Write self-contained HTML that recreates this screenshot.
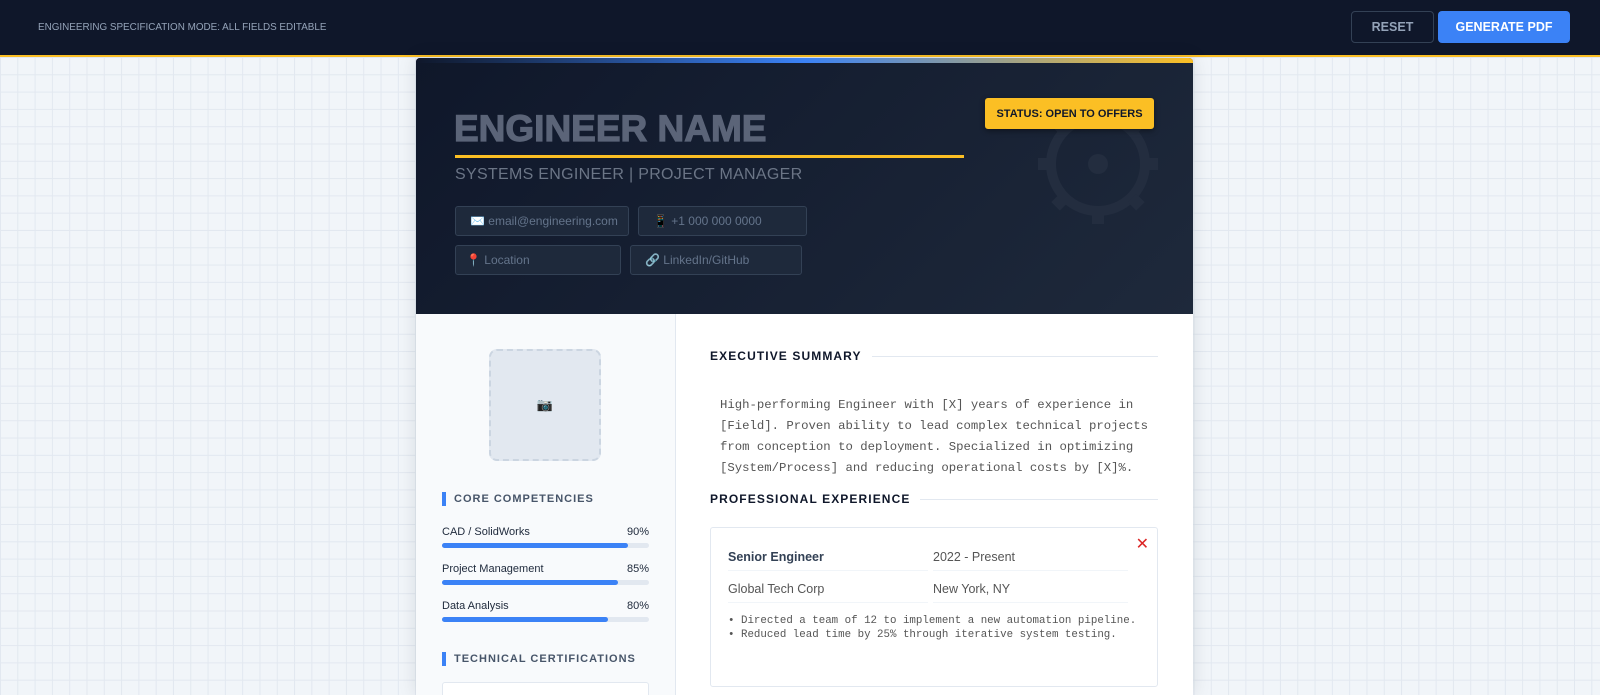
<!DOCTYPE html>
<html><head><meta charset="utf-8"><style>
*{box-sizing:border-box;margin:0;padding:0}
html,body{width:1600px;height:695px;overflow:hidden}
body{font-family:"Liberation Sans",sans-serif;background-color:#f1f5f9;background-image:linear-gradient(#e2e8f0 1px,transparent 1px),linear-gradient(90deg,#e2e8f0 1px,transparent 1px);background-size:17.3px 17.3px;background-position:0 57px,0 0;position:relative}
.top{position:absolute;left:0;top:0;width:1600px;height:57px;background:#0f172a;border-bottom:2px solid #fbbf24}
.top .m{position:absolute;left:38px;top:22px;font-size:9.9px;color:#94a3b8}
.btn{position:absolute;top:11px;height:32px;border-radius:4px;font-size:12.5px;font-weight:bold;display:flex;align-items:center;justify-content:center}
.reset{left:1351px;width:83px;border:1px solid #334155;color:#94a3b8}
.gen{left:1438px;width:132px;background:#3b82f6;color:#fff}
.card{position:absolute;left:416px;top:58px;width:777px;height:637px;background:#fff;box-shadow:0 0 18px rgba(15,23,42,.12);border-radius:4px 4px 0 0;overflow:hidden}
.hdr{position:absolute;left:0;top:0;width:777px;height:256px;background:linear-gradient(135deg,#0f172a,#1e293b)}
.stripe{position:absolute;left:0;top:0;width:777px;height:5px;background:linear-gradient(90deg,#0f172a,#3b82f6 50%,#fbbf24)}
.name{position:absolute;left:38px;top:50px;font-size:37px;font-weight:bold;color:#5b6478;-webkit-text-stroke:1.2px #5b6478}
.ul{position:absolute;left:39px;top:97px;width:509px;height:3px;background:#fbbf24}
.sub{position:absolute;left:39px;top:108px;font-size:16px;color:#6b7586;letter-spacing:.3px}
.f{position:absolute;height:30px;border:1px solid #334155;background:#1e293b;border-radius:3px;color:#64748b;font-size:12px;display:flex;align-items:center;padding-left:14px;gap:8px;overflow:hidden;white-space:nowrap}
.status{position:absolute;left:569px;top:40px;width:169px;height:31px;background:#fbbf24;border-radius:3px;font-size:11px;font-weight:bold;color:#0f172a;display:flex;align-items:center;justify-content:center;box-shadow:0 2px 6px rgba(0,0,0,.4)}
.side{position:absolute;left:0;top:256px;width:260px;height:381px;background:#f8fafc;border-right:1px solid #e2e8f0}
.photo{position:absolute;left:73px;top:35px;width:112px;height:112px;border:2px dashed #cbd5e1;background:#e2e8f0;border-radius:8px;display:flex;align-items:center;justify-content:center;font-size:13px}
.sh{position:absolute;left:26px;font-size:11px;font-weight:bold;letter-spacing:1px;color:#475569;border-left:4px solid #3b82f6;padding-left:8px;line-height:14px}
.sk{position:absolute;left:26px;width:207px;font-size:11px;color:#1e293b}
.sk span{float:right}
.bar{position:absolute;left:26px;width:207px;height:5px;background:#e2e8f0;border-radius:3px}
.bar i{display:block;height:5px;background:#3b82f6;border-radius:3px}
.mh{position:absolute;left:294px;width:448px;font-size:12px;font-weight:bold;letter-spacing:1.1px;color:#0f172a;display:flex;align-items:center;gap:10px}
.mh:after{content:"";flex:1;height:1px;background:#e2e8f0}
.sum{position:absolute;left:304px;top:337px;font-family:"Liberation Mono",monospace;font-size:12.3px;line-height:21px;color:#555}
.exp{position:absolute;left:294px;top:469px;width:448px;height:160px;border:1px solid #e2e8f0;border-radius:3px}
.row{position:absolute;font-size:12.5px;border-bottom:1px solid #f1f5f9;padding-bottom:6px}
</style></head><body>
<div class="top"><div class="m">ENGINEERING SPECIFICATION MODE: ALL FIELDS EDITABLE</div>
<div class="btn reset">RESET</div><div class="btn gen">GENERATE PDF</div></div>
<div class="card">
<div class="hdr">
<div class="stripe"></div>
<svg style="position:absolute;left:620px;top:44px" width="124" height="124" viewBox="-62 -62 124 124"><g fill="#232d3f"><circle r="47" fill="none" stroke="#232d3f" stroke-width="10"/><circle r="10"/><rect x="-6" y="-60" width="12" height="12"/><rect x="-6" y="48" width="12" height="12"/><rect x="-60" y="-6" width="12" height="12"/><rect x="48" y="-6" width="12" height="12"/><g transform="rotate(45)"><rect x="-6" y="-60" width="12" height="12"/><rect x="-6" y="48" width="12" height="12"/><rect x="-60" y="-6" width="12" height="12"/><rect x="48" y="-6" width="12" height="12"/></g></g></svg>
<div class="name">ENGINEER NAME</div><div class="ul"></div>
<div class="sub">SYSTEMS ENGINEER | PROJECT MANAGER</div>
<div class="f" style="left:39px;top:148px;width:174px">✉️ email@engineering.com</div>
<div class="f" style="left:222px;top:148px;width:169px">📱 +1 000 000 0000</div>
<div class="f" style="left:39px;top:187px;width:166px;padding-left:10px;gap:4px">📍 Location</div>
<div class="f" style="left:214px;top:187px;width:172px">🔗 LinkedIn/GitHub</div>
<div class="status">STATUS: OPEN TO OFFERS</div>
</div>
<div class="side">
<div class="photo">📷</div>
<div class="sh" style="top:178px">CORE COMPETENCIES</div>
<div class="sk" style="top:212px">CAD / SolidWorks<span>90%</span></div><div class="bar" style="top:229px"><i style="width:90%"></i></div>
<div class="sk" style="top:249px">Project Management<span>85%</span></div><div class="bar" style="top:266px"><i style="width:85%"></i></div>
<div class="sk" style="top:286px">Data Analysis<span>80%</span></div><div class="bar" style="top:303px"><i style="width:80%"></i></div>
<div class="sh" style="top:338px">TECHNICAL CERTIFICATIONS</div>
<div style="position:absolute;left:26px;top:368px;width:207px;height:40px;background:#fff;border:1px solid #e2e8f0;border-radius:3px"></div>
</div>
<div class="mh" style="top:291px">EXECUTIVE SUMMARY</div>
<div class="sum">High-performing Engineer with [X] years of experience in<br>[Field]. Proven ability to lead complex technical projects<br>from conception to deployment. Specialized in optimizing<br>[System/Process] and reducing operational costs by [X]%.</div>
<div class="mh" style="top:434px">PROFESSIONAL EXPERIENCE</div>
<div class="exp">
<div style="position:absolute;right:8px;top:6px;color:#dc2626;font-size:16px">✕</div>
<div class="row" style="left:17px;top:22px;width:200px;font-weight:bold;color:#334155">Senior Engineer</div>
<div class="row" style="left:222px;top:22px;width:195px;color:#555">2022 - Present</div>
<div class="row" style="left:17px;top:54px;width:200px;color:#555">Global Tech Corp</div>
<div class="row" style="left:222px;top:54px;width:195px;color:#555">New York, NY</div>
<div style="position:absolute;left:17px;top:86px;font-family:'Liberation Mono',monospace;font-size:10.8px;line-height:14px;color:#555">• Directed a team of 12 to implement a new automation pipeline.<br>• Reduced lead time by 25% through iterative system testing.</div>
</div>
</div>
</body></html>
